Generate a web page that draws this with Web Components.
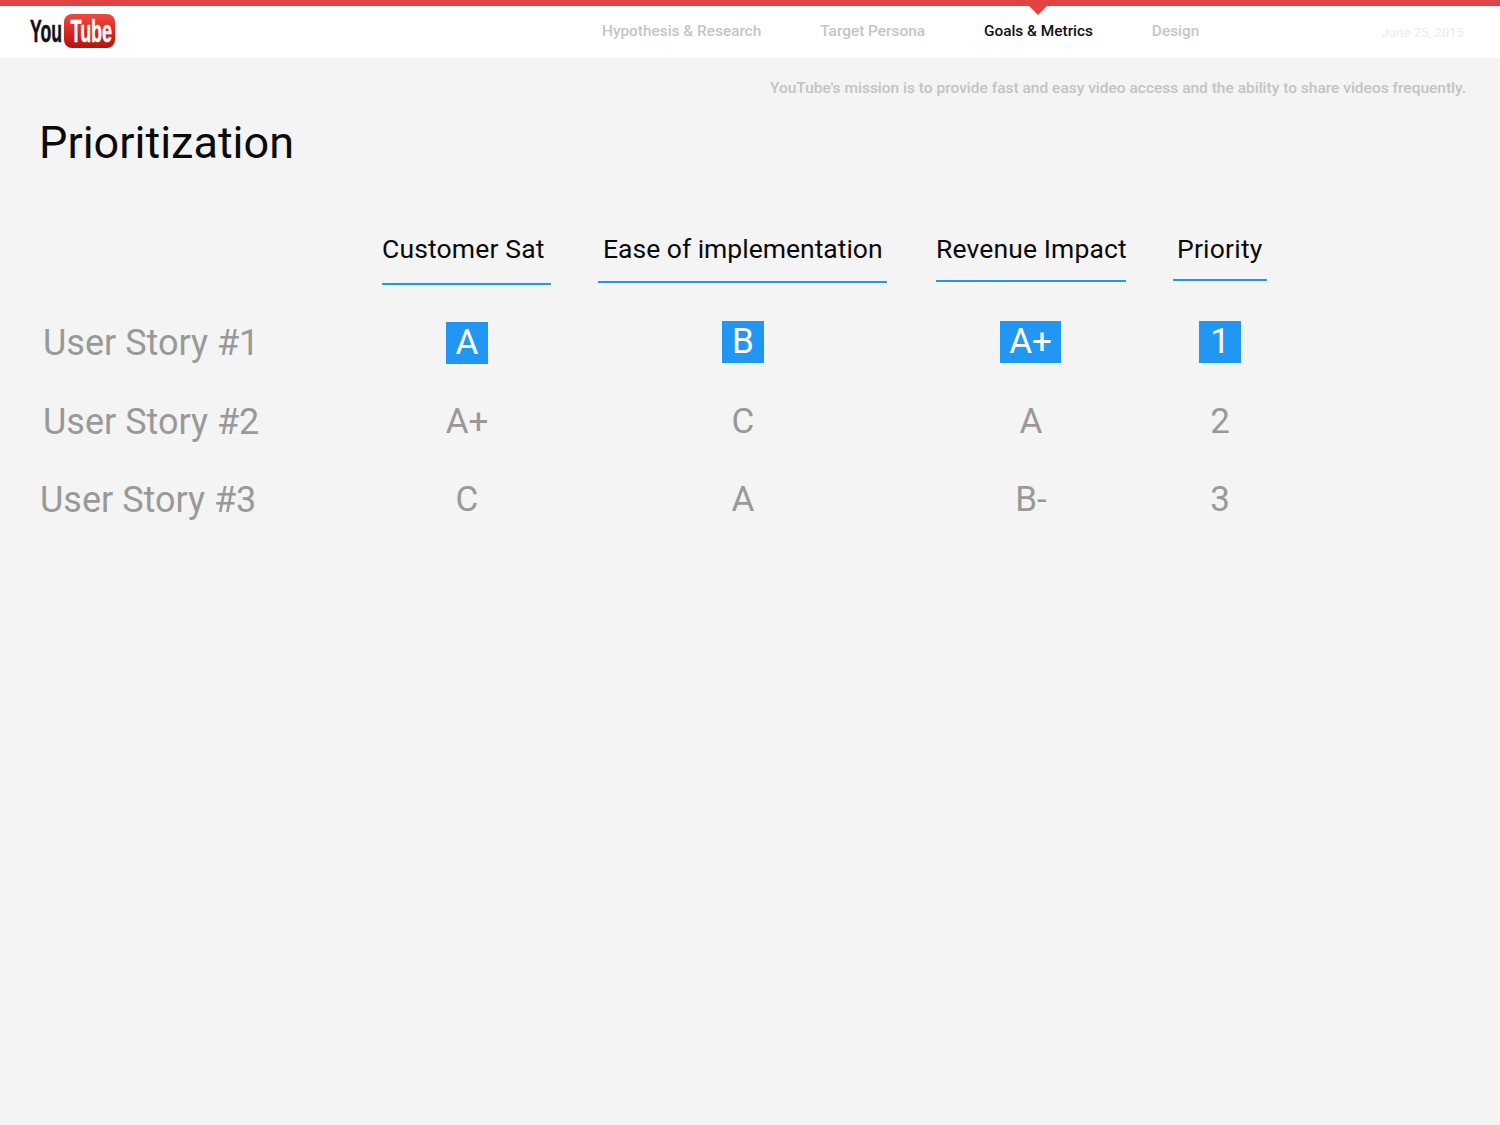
<!DOCTYPE html>
<html>
<head>
<meta charset="utf-8">
<title>Prioritization</title>
<style>
  html, body { margin: 0; background: #f4f4f4; }
  body { font-family: Roboto, "Liberation Sans", sans-serif; min-height: 1125px; }
</style>
</head>
<body>
<yt-header>
  <nav-link>Hypothesis &amp; Research</nav-link>
  <nav-link>Target Persona</nav-link>
  <nav-link active>Goals &amp; Metrics</nav-link>
  <nav-link>Design</nav-link>
</yt-header>
<slide-body heading="Prioritization" mission="YouTube's mission is to provide fast and easy video access and the ability to share videos frequently.">
  <score-table></score-table>
</slide-body>

<script>
class YtLogo extends HTMLElement {
  constructor() {
    super();
    this.attachShadow({ mode: 'open' });
    this.shadowRoot.innerHTML = `
      <style>
        :host { display: block; width: 88px; height: 36px; }
        svg { display: block; }
        text { font-family: "Liberation Sans", Roboto, sans-serif; font-weight: 700; font-size: 31px; stroke-width: .5px; }
      </style>
      <svg width="88" height="36" viewBox="0 0 88 36">
        <defs>
          <linearGradient id="red" x1="0" y1="0" x2="0" y2="1">
            <stop offset="0" stop-color="#ee4a40"/>
            <stop offset=".45" stop-color="#dd2a24"/>
            <stop offset="1" stop-color="#b3140f"/>
          </linearGradient>
        </defs>
        <text transform="translate(1 29) scale(.57 1)" fill="#111" stroke="#111">You</text>
        <rect x="35" y="1" width="51" height="34" rx="8" fill="url(#red)"/>
        <text transform="translate(41.5 29) scale(.58 1)" fill="#fff" stroke="#fff">Tube</text>
      </svg>`;
  }
}

class NavLink extends HTMLElement {
  constructor() {
    super();
    this.attachShadow({ mode: 'open' });
    this.shadowRoot.innerHTML = `
      <style>
        :host { display: block; position: relative; font-size: 15.4px; font-weight: 500; line-height: 18px; color: #c5c5c5; white-space: nowrap; }
        :host([active]) { color: #111; }
        :host([active])::before {
          content: ""; position: absolute; left: 50%; top: -16px; margin-left: -9px;
          border: 9px solid transparent; border-bottom: 0; border-top-color: #e24242;
        }
      </style>
      <slot></slot>`;
  }
}

class YtHeader extends HTMLElement {
  constructor() {
    super();
    this.attachShadow({ mode: 'open' });
    this.shadowRoot.innerHTML = `
      <style>
        :host { display: flex; height: 52px; border-top: 6px solid #e24242; background: #fff; align-items: center; padding: 0 36px 0 29px; }
        yt-logo { align-self: flex-start; margin-top: 7px; }
        nav { display: flex; gap: 58.9px; margin-left: 485px; margin-top: -2px; }
        .date { margin-left: auto; font-size: 13.2px; color: #ebebeb; }
      </style>
      <yt-logo></yt-logo>
      <nav><slot></slot></nav>
      <span class="date">June 25, 2015</span>`;
  }
}

class SlideBody extends HTMLElement {
  constructor() {
    super();
    this.attachShadow({ mode: 'open' });
    this.shadowRoot.innerHTML = `
      <style>
        :host { display: block; padding: 20px 34px 0 40px; }
        .mission { text-align: right; font-size: 15.5px; line-height: 20px; font-weight: 500; color: #c3c3c3; }
        h1 { margin: 13px 0 0 -1px; font-size: 45px; line-height: 64px; font-weight: 400; color: #0a0a0a; }
      </style>
      <div class="mission"></div>
      <h1></h1>
      <slot></slot>`;
    this.shadowRoot.querySelector('.mission').textContent = this.getAttribute('mission');
    this.shadowRoot.querySelector('h1').textContent = this.getAttribute('heading');
  }
}

// drop = how far the underline sits above the lowest one, the reference has them uneven
const COLS = [
  { label: 'Customer Sat', pad: 0, drop: 0, ls: .15 },
  { label: 'Ease of implementation', pad: 5, drop: 2, ls: 0 },
  { label: 'Revenue Impact', pad: 0, drop: 3, ls: .12 },
  { label: 'Priority', pad: 4, drop: 4, ls: .2 }
];

const ROWS = [
  { name: 'User Story #1', x: 3, hi: true, cells: ['A', 'B', 'A+', '1'] },
  { name: 'User Story #2', x: 3, cells: ['A+', 'C', 'A', '2'] },
  { name: 'User Story #3', x: 0, cells: ['C', 'A', 'B-', '3'] }
];

class ScoreTable extends HTMLElement {
  constructor() {
    super();
    this.attachShadow({ mode: 'open' });
    const head = COLS.map((c, i) => `${i ? '<div></div>' : ''}
      <div class="th" style="padding-left:${c.pad}px;height:${54 - c.drop}px;letter-spacing:${c.ls}px">${c.label}</div>`).join('');
    const cell = (r, v, i) => {
      const cls = ['hi', v.length > 1 ? 'wide' : '', i === 0 ? 'low' : ''].join(' ');
      return `${i ? '<div></div>' : ''}
        <div class="cell c${i}"><span class="${r.hi ? cls : ''}">${v}</span></div>`;
    };
    const body = ROWS.map(r => `
      <div class="name" style="padding-left:${r.x}px">${r.name}</div>
      ${r.cells.map((v, i) => cell(r, v, i)).join('')}`).join('');
    this.shadowRoot.innerHTML = `
      <style>
        :host { display: block; margin-top: 56px; }
        .grid { display: grid; grid-template-columns: 342px 169px 47px 289px 49px 190px 47px 94px; grid-template-rows: 72px 79px 78px 78px; }
        .th { align-self: start; box-sizing: border-box; font-size: 26.5px; line-height: 36px; color: #0a0a0a; border-bottom: 2px solid #2196f3; white-space: nowrap; }
        .name { font-size: 36px; line-height: 80px; height: 78px; color: #999; white-space: nowrap; }
        .cell { display: flex; align-items: center; justify-content: center; font-size: 35px; color: #999; }
        .c0, .c1 { padding-left: 1px; }
        .hi { background: #2196f3; color: #fff; width: 42px; height: 42px; line-height: 41px; text-align: center; margin-top: -1px; }
        .wide { width: 61px; margin-left: -1px; }
        .low { margin-top: 1px; }
      </style>
      <div class="grid">
        <div></div>${head}${body}
      </div>`;
  }
}

customElements.define('yt-logo', YtLogo);
customElements.define('nav-link', NavLink);
customElements.define('yt-header', YtHeader);
customElements.define('slide-body', SlideBody);
customElements.define('score-table', ScoreTable);
</script>
</body>
</html>
